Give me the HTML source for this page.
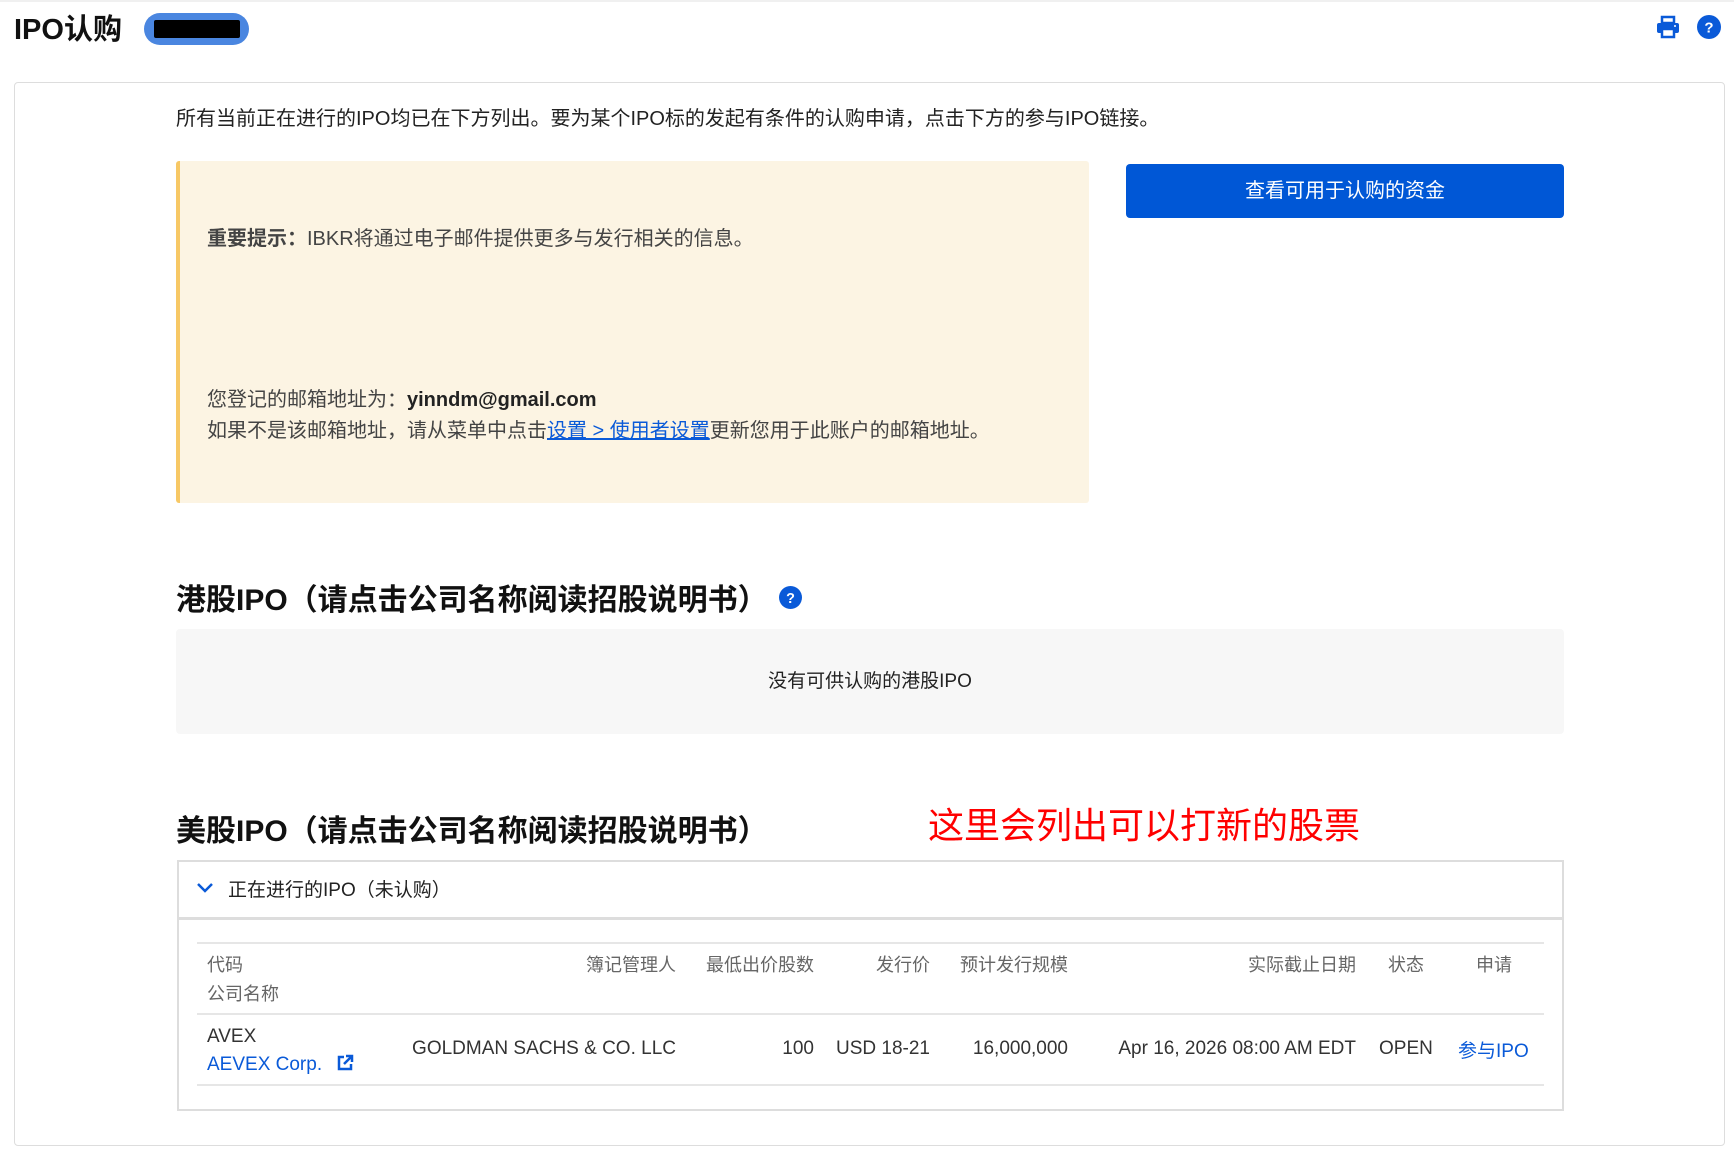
<!DOCTYPE html>
<html><head><meta charset="utf-8"><style>
*{margin:0;padding:0;box-sizing:border-box}
body{width:1734px;height:1156px;background:#fff;font-family:"Liberation Sans","Noto Sans CJK SC",sans-serif;color:#222;position:relative;overflow:hidden}
.a{position:absolute;white-space:nowrap}
.topline{position:absolute;left:0;top:0;width:1734px;height:2px;background:#f0f0f0}
.card{position:absolute;left:14px;top:82px;width:1711px;height:1064px;border:1px solid #ddd;border-radius:4px}
.note{position:absolute;left:176px;top:161px;width:913px;height:342px;background:#fcf4e3;border-left:4px solid #f7c865;border-radius:3px}
.btn{position:absolute;left:1126px;top:164px;width:438px;height:54px;background:#0057d6;border-radius:4px;color:#fff;font-size:20px;text-align:center;line-height:54px}
.grey{position:absolute;left:176px;top:629px;width:1388px;height:105px;background:#f7f7f7;border-radius:4px;text-align:center;line-height:105px;font-size:19px}
.acc{position:absolute;left:177px;top:860px;width:1387px;height:251px;border:2px solid #ddd}
.hl{position:absolute;left:197px;width:1347px;height:2px;background:#e6e6e6}
.th{color:#666;font-size:18px}
.td{color:#333;font-size:19px}
.blue{color:#0a5ad8}
</style></head><body>
<div class="topline"></div>
<div class="a" style="left:14px;top:6px;font-size:29px;font-weight:bold;color:#111">IPO认购</div>
<div class="a" style="left:144px;top:13px;width:105px;height:32px;border-radius:16px;background:#4a86e0"><div style="position:absolute;left:10px;top:7px;width:86px;height:18px;background:#000;border-radius:2px"></div></div>
<svg class="a" style="left:1656px;top:15px" width="24" height="24" viewBox="0 0 24 24"><path d="M6 2h12v6H6z" fill="none" stroke="#0a5ad8" stroke-width="2.5"/><rect x="1" y="8" width="22" height="10" rx="2" fill="#0a5ad8"/><rect x="6" y="14" width="12" height="8" fill="#fff" stroke="#0a5ad8" stroke-width="2.5"/><circle cx="19" cy="11" r="1" fill="#fff"/></svg>
<svg class="a" style="left:1697px;top:15px" width="24" height="24" viewBox="0 0 24 24"><circle cx="12" cy="12" r="12" fill="#0a5ad8"/><text x="12" y="17.5" text-anchor="middle" font-family="Liberation Sans" font-weight="bold" font-size="15" fill="#fff">?</text></svg>
<div class="card"></div>
<div class="a" style="left:176px;top:102px;font-size:20px">所有当前正在进行的IPO均已在下方列出。要为某个IPO标的发起有条件的认购申请，点击下方的参与IPO链接。</div>
<div class="note"></div>
<div class="a" style="left:207px;top:222px;font-size:20px;color:#444"><b>重要提示：</b>IBKR将通过电子邮件提供更多与发行相关的信息。</div>
<div class="a" style="left:207px;top:383px;font-size:20px;color:#444">您登记的邮箱地址为：<b style="color:#222">yinndm@gmail.com</b></div>
<div class="a" style="left:207px;top:414px;font-size:20px;color:#444">如果不是该邮箱地址，请从菜单中点击<span class="blue" style="text-decoration:underline">设置 &gt; 使用者设置</span>更新您用于此账户的邮箱地址。</div>
<div class="btn">查看可用于认购的资金</div>
<div class="a" style="left:176px;top:575px;font-size:30px;font-weight:bold;color:#111">港股IPO（请点击公司名称阅读招股说明书）</div>
<svg class="a" style="left:779px;top:586px" width="23" height="23" viewBox="0 0 24 24"><circle cx="12" cy="12" r="12" fill="#0a5ad8"/><text x="12" y="17.5" text-anchor="middle" font-family="Liberation Sans" font-weight="bold" font-size="15" fill="#fff">?</text></svg>
<div class="grey">没有可供认购的港股IPO</div>
<div class="a" style="left:176px;top:806px;font-size:30px;font-weight:bold;color:#111">美股IPO（请点击公司名称阅读招股说明书）</div>
<div class="a" style="left:928px;top:797px;font-size:36px;color:#f00">这里会列出可以打新的股票</div>
<div class="acc"><div style="position:absolute;left:0;top:55px;width:100%;height:3px;background:#ddd"></div></div>
<svg class="a" style="left:196px;top:881px" width="18" height="14" viewBox="0 0 18 14"><path d="M2 3l7 7 7-7" fill="none" stroke="#0a5ad8" stroke-width="2.5"/></svg>
<div class="a" style="left:228px;top:875px;font-size:19px">正在进行的IPO（未认购）</div>
<div class="hl" style="top:942px"></div>
<div class="hl" style="top:1013px"></div>
<div class="hl" style="top:1084px"></div>
<div class="a th" style="left:207px;top:951px">代码</div>
<div class="a th" style="left:207px;top:980px">公司名称</div>
<div class="a th" style="right:1058px;top:951px">簿记管理人</div>
<div class="a th" style="right:920px;top:951px">最低出价股数</div>
<div class="a th" style="right:804px;top:951px">发行价</div>
<div class="a th" style="left:960px;top:951px">预计发行规模</div>
<div class="a th" style="right:378px;top:951px">实际截止日期</div>
<div class="a th" style="left:1388px;top:951px">状态</div>
<div class="a th" style="left:1476px;top:951px">申请</div>
<div class="a td" style="left:207px;top:1026px">AVEX</div>
<div class="a td blue" style="left:207px;top:1054px">AEVEX Corp.</div>
<svg class="a" style="left:336px;top:1054px" width="18" height="18" viewBox="0 0 18 18"><path d="M8 3H3v12h12v-5" fill="none" stroke="#0a5ad8" stroke-width="2.5"/><path d="M10 2h6v6M16 2L8 10" fill="none" stroke="#0a5ad8" stroke-width="2.5"/></svg>
<div class="a td" style="right:1058px;top:1038px;font-size:19px">GOLDMAN SACHS &amp; CO. LLC</div>
<div class="a td" style="right:920px;top:1038px">100</div>
<div class="a td" style="right:804px;top:1038px">USD 18-21</div>
<div class="a td" style="right:666px;top:1038px">16,000,000</div>
<div class="a td" style="right:378px;top:1038px">Apr 16, 2026 08:00 AM EDT</div>
<div class="a td" style="left:1379px;top:1038px">OPEN</div>
<div class="a td blue" style="left:1458px;top:1036px">参与IPO</div>
</body></html>
